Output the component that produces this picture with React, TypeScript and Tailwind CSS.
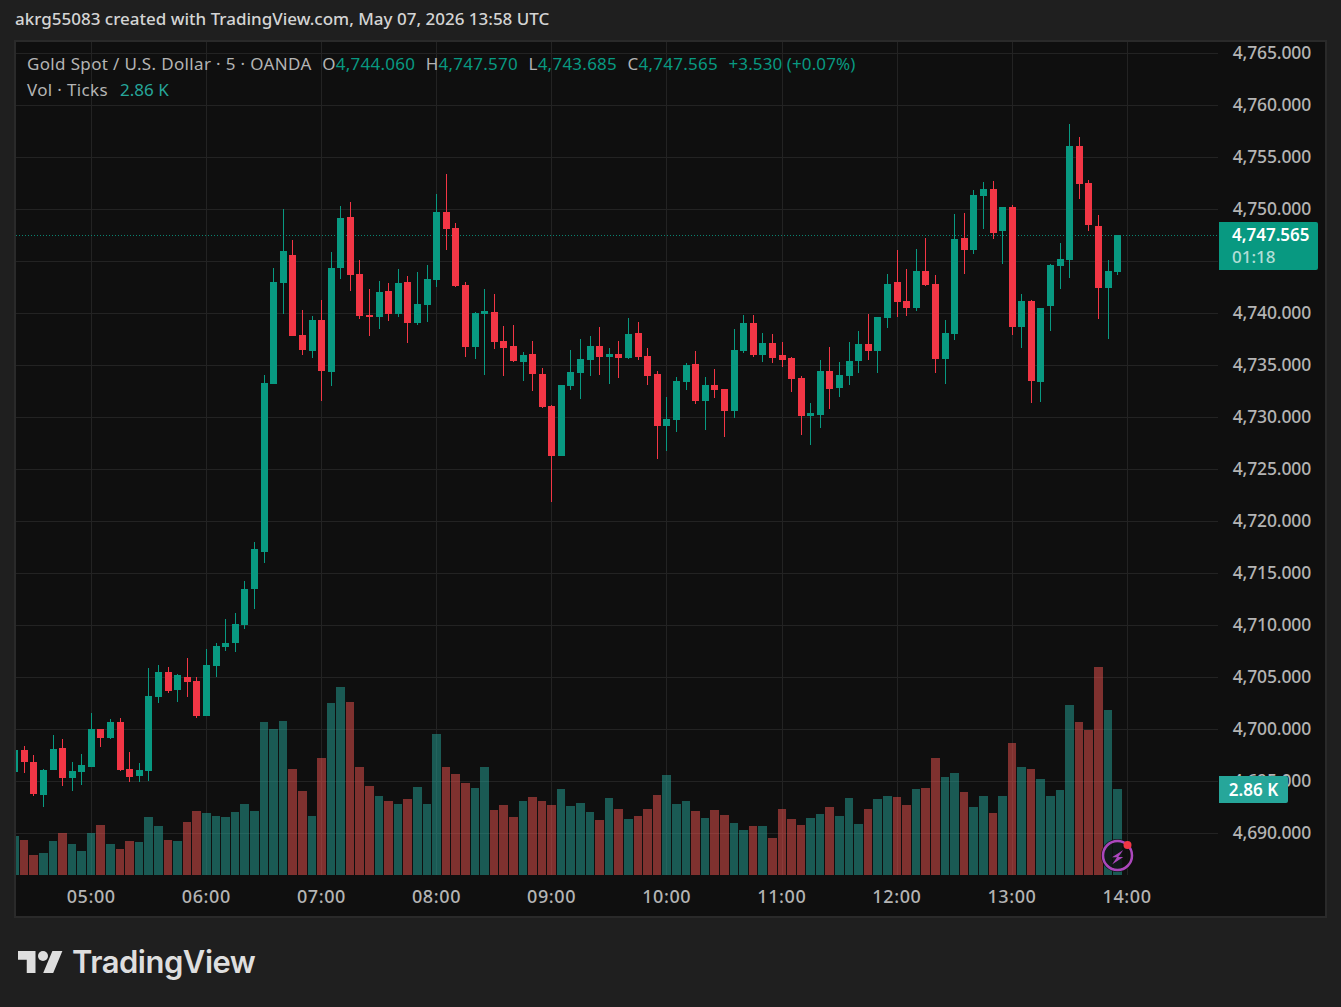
// TradingView chart snapshot: candles and volume are read off the picture in page pixels
type Row = [number, number, number, number, 0 | 1]; // wick top, body top, body bottom, wick bottom, 1 = up

const segment = (origin: number, rows: Row[]) =>
  rows.map(([h, t, b, l, up]) => ({
    h: origin + h / 3,
    t: origin + t / 3,
    b: origin + b / 3,
    l: origin + l / 3,
    up,
  }));

const candles = [
  ...segment(540, [
    [624, 630, 696, 696, 1], [618, 630, 666, 699, 0], [645, 666, 762, 768, 0], [687, 690, 765, 801, 1],
    [585, 627, 690, 690, 1], [597, 624, 714, 738, 0], [666, 693, 714, 753, 1], [642, 675, 696, 735, 1],
    [519, 567, 681, 681, 1], [567, 567, 594, 621, 0], [537, 546, 594, 597, 1], [534, 546, 690, 693, 0],
    [636, 687, 711, 726, 0], [669, 690, 708, 726, 1], [384, 468, 693, 723, 1], [375, 396, 471, 489, 1],
    [381, 396, 453, 459, 0], [402, 405, 450, 486, 1], [354, 411, 426, 471, 0], [411, 423, 528, 534, 0],
    [327, 375, 528, 528, 1], [309, 318, 378, 411, 1], [237, 309, 321, 333, 1], [219, 252, 309, 336, 1],
    [123, 147, 255, 267, 1], [6, 27, 147, 207, 1], [-495, -471, 36, 69, 1],
  ]),
  ...segment(170, [
    [294, 336, 642, 642, 1], [117, 243, 339, 432, 1], [210, 255, 498, 498, 0], [420, 495, 540, 555, 0],
    [438, 450, 543, 564, 1], [390, 450, 603, 693, 0], [246, 294, 606, 648, 1], [108, 144, 294, 327, 1],
    [96, 141, 315, 363, 0], [270, 312, 438, 447, 0], [357, 435, 441, 498, 0], [333, 366, 441, 477, 1],
    [339, 363, 432, 453, 0], [297, 339, 432, 441, 1], [318, 336, 459, 519, 0], [306, 402, 459, 465, 1],
    [285, 327, 405, 456, 1], [72, 126, 330, 351, 1], [12, 126, 177, 240, 0], [159, 174, 348, 351, 0],
    [336, 345, 531, 561, 0], [426, 429, 531, 567, 1], [357, 423, 432, 615, 1], [372, 426, 516, 537, 0],
    [468, 513, 534, 618, 0], [465, 528, 573, 576, 0], [546, 555, 576, 633, 1],
  ]),
  ...segment(300, [
    [123, 162, 222, 273, 0], [204, 222, 321, 324, 0], [315, 318, 468, 606, 0], [255, 255, 468, 468, 1],
    [150, 216, 258, 270, 1], [117, 177, 219, 297, 1], [108, 138, 180, 228, 1], [81, 138, 171, 225, 0],
    [144, 162, 171, 252, 1], [123, 162, 174, 234, 0], [54, 102, 174, 177, 1], [66, 99, 171, 180, 0],
    [144, 168, 228, 255, 0], [213, 222, 378, 477, 0], [291, 357, 378, 453, 1], [231, 243, 360, 396, 1],
    [189, 195, 246, 270, 1], [153, 192, 303, 312, 0], [231, 255, 303, 390, 1], [207, 255, 270, 294, 0],
    [267, 267, 333, 411, 0], [87, 150, 333, 354, 1], [45, 69, 153, 159, 1], [45, 69, 165, 171, 0],
    [99, 129, 165, 186, 1], [102, 129, 174, 189, 0], [126, 165, 180, 201, 0], [171, 174, 237, 276, 0],
    [228, 234, 348, 405, 0], [309, 339, 348, 435, 1], [180, 213, 345, 384, 1], [141, 213, 267, 327, 0],
    [186, 225, 264, 291, 1], [126, 183, 228, 255, 1], [93, 132, 183, 219, 1],
  ]),
  ...segment(110, [
    [612, 702, 723, 750, 0], [621, 621, 723, 789, 1], [492, 522, 624, 654, 1], [420, 516, 576, 621, 0],
    [477, 573, 594, 618, 0], [417, 483, 594, 603, 1], [384, 483, 525, 528, 0], [495, 522, 747, 789, 0],
    [630, 669, 747, 822, 1], [312, 387, 672, 690, 1], [309, 384, 420, 492, 0], [240, 255, 420, 432, 1],
    [216, 237, 258, 357, 1], [213, 237, 369, 387, 0], [291, 291, 363, 462, 1], [285, 291, 651, 675, 0],
    [552, 573, 651, 714, 1], [570, 573, 813, 879, 0], [594, 594, 816, 876, 1], [462, 465, 588, 663, 1],
    [399, 447, 468, 537, 1], [42, 108, 450, 504, 1], [81, 108, 222, 267, 0], [210, 219, 345, 363, 0],
    [315, 348, 534, 627, 0], [450, 483, 534, 687, 1], [375, 375, 486, 495, 1],
  ]),
];

const volumes = [
  ...[888, 900, 945, 939, 903, 879, 912, 933, 879, 855, 912, 927, 903, 906, 831, 858, 900, 903, 846, 813, 819, 828, 831, 816, 792, 813, 546, 567, 543].map(
    (v) => 540 + v / 3,
  ),
  ...[327, 393, 468, 294, 129, 81, 126, 321, 378, 408, 423, 432, 417, 381, 432, 222, 321, 342, 369, 384, 321, 450, 435, 471, 423, 411, 423, 435, 387, 438, 429, 456, 480, 414, 447, 477, 468, 447, 405, 345, 432, 423, 453, 474,
    450, 465, 489, 510, 498, 498, 534, 447, 477, 495, 474, 462, 441, 468, 414, 492, 447, 417, 408, 411, 435, 387, 384, 294, 351, 339, 396, 441, 408, 459, 408, 249, 321, 327, 357, 408, 390, 135, 186, 210, 21, 150, 387].map(
    (v) => 660 + v / 3,
  ),
];

const FIRST = -8;
const STEP = 115.1 / 12;
const barX = (k: number) => Math.round(90.9 + STEP * k);

// the 4,745 label sits behind the last-price badge, so that row stays empty
const prices = ["4,765.000", "4,760.000", "4,755.000", "4,750.000", "", "4,740.000", "4,735.000", "4,730.000", "4,725.000", "4,720.000", "4,715.000", "4,710.000", "4,705.000", "4,700.000", "4,695.000", "4,690.000"];
const times = ["05:00", "06:00", "07:00", "08:00", "09:00", "10:00", "11:00", "12:00", "13:00", "14:00"];

const ChartCanvas = () => (
  <svg viewBox="16 42 1202 833" width={1202} height={833} className="block">
    {prices.map((_, i) => (
      <rect key={i} x={16} y={53 + i * 52} width={1202} height={1} fill="#232323" />
    ))}
    {times.map((_, i) => (
      <rect key={i} x={barX(i * 12)} y={42} width={1} height={833} fill="#232323" />
    ))}
    {volumes.map((top, i) => {
      const k = i + FIRST;
      const left = barX(k) - 4;
      const right = barX(k + 1) - 5;
      return (
        <rect
          key={i}
          x={left}
          y={top}
          width={right - left}
          height={875 - top}
          fill={candles[i].up ? "#26a69a" : "#ef5350"}
          fillOpacity={0.5}
        />
      );
    })}
    <line x1={16} x2={1218} y1={235.5} y2={235.5} stroke="#089981" strokeOpacity={0.85} strokeDasharray="1 2" />
    {candles.map((c, i) => {
      const x = barX(i + FIRST);
      const fill = c.up ? "#089981" : "#f23645";
      return (
        <g key={i} fill={fill}>
          <rect x={x} y={c.h} width={1} height={c.l - c.h} />
          <rect x={x - 3} y={c.t} width={7} height={c.b - c.t} />
        </g>
      );
    })}
    <circle cx={1117.5} cy={855.5} r={16.5} fill="#0f0f0f" fillOpacity={0.85} />
    <circle cx={1117.5} cy={855.5} r={14.5} fill="none" stroke="#ab47bc" strokeWidth={2.5} />
    <path d="M1123.300 850l-11.300 7.300h5l-5 7.200 11.300-7.400h-5z" fill="#ab47bc" />
    <circle cx={1127.500} cy={845} r={4} fill="#f23645" />
  </svg>
);

const Logo = () => (
  <svg viewBox="0 4 36 18" width={45} height={22.5} fill="#dedede">
    <path d="M14 22H7V11H0V4h14v18zM28 22h-8l7.5-18h8L28 22z" />
    <circle cx="20" cy="8" r="4" />
  </svg>
);

const Ohlc = ({ label, value }: { label: string; value: string }) => (
  <span className="flex tracking-[0.25px]">
    <span>{label}</span>
    <span className="text-[#089981]">{value}</span>
  </span>
);

export default function App() {
  return (
    <div className="flex h-[1007px] w-[1341px] flex-col overflow-hidden bg-[#1f1f1f] font-['Noto_Sans',sans-serif] text-[#b4b4b4]">
      <div className="flex h-[40px] items-center pb-[2px] pl-[15px] text-[17px] font-medium text-[#d4d4d4]">
        akrg55083 created with TradingView.com, May 07, 2026 13:58 UTC
      </div>

      <div className="ml-[14px] flex h-[878px] w-[1313px] flex-col border-2 border-[#2a2a2a] bg-[#0f0f0f]">
        <div className="relative flex h-[833px]">
          <ChartCanvas />

          <div className="absolute left-[11px] top-[11px] flex h-[22px] items-center gap-[10.5px] text-[17px] tracking-[0.35px]">
            <span>Gold Spot / U.S. Dollar · 5 · OANDA</span>
            <Ohlc label="O" value="4,744.060" />
            <Ohlc label="H" value="4,747.570" />
            <Ohlc label="L" value="4,743.685" />
            <Ohlc label="C" value="4,747.565" />
            <span className="tracking-[0.1px] text-[#089981]">+3.530 (+0.07%)</span>
          </div>
          <div className="absolute left-[11px] top-[37px] flex h-[22px] items-center gap-[12px] text-[17px] tracking-[0.35px]">
            <span>Vol · Ticks</span>
            <span className="tracking-[0px] text-[#26a69a]">2.86 K</span>
          </div>

          <div className="flex flex-1 flex-col gap-[32px] pr-[14px] text-right text-[17.5px] font-medium tracking-[-0.15px]">
            {prices.map((p, i) => (
              <div key={i} className="h-[20px] leading-[20px]">
                {p}
              </div>
            ))}
          </div>

          <div className="absolute left-[1203px] top-[180px] flex h-[48px] w-[99px] flex-col justify-center rounded-r-[2px] bg-[#089981] pl-[13px] text-[17px] font-semibold leading-[22px] text-white">
            <span>4,747.565</span>
            <span className="font-medium text-white/70">01:18</span>
          </div>
          <div className="absolute left-[1203px] top-[734px] flex h-[27px] w-[69px] items-center justify-center rounded-r-[2px] bg-[#26a69a] text-[17px] font-semibold text-white">
            2.86 K
          </div>
        </div>

        <div className="flex flex-1 items-center pl-[17.7px] pt-[1px] text-[18px] font-medium tracking-[0.6px]">
          {times.map((t) => (
            <div key={t} className="w-[115.1px] text-center">
              {t}
            </div>
          ))}
        </div>
      </div>

      <div className="flex flex-1 items-center gap-[9px] pb-[1px] pl-[18px]">
        <Logo />
        <span className="font-['Inter',sans-serif] text-[31px] font-semibold tracking-[-0.5px] text-[#dedede]">TradingView</span>
      </div>
    </div>
  );
}
